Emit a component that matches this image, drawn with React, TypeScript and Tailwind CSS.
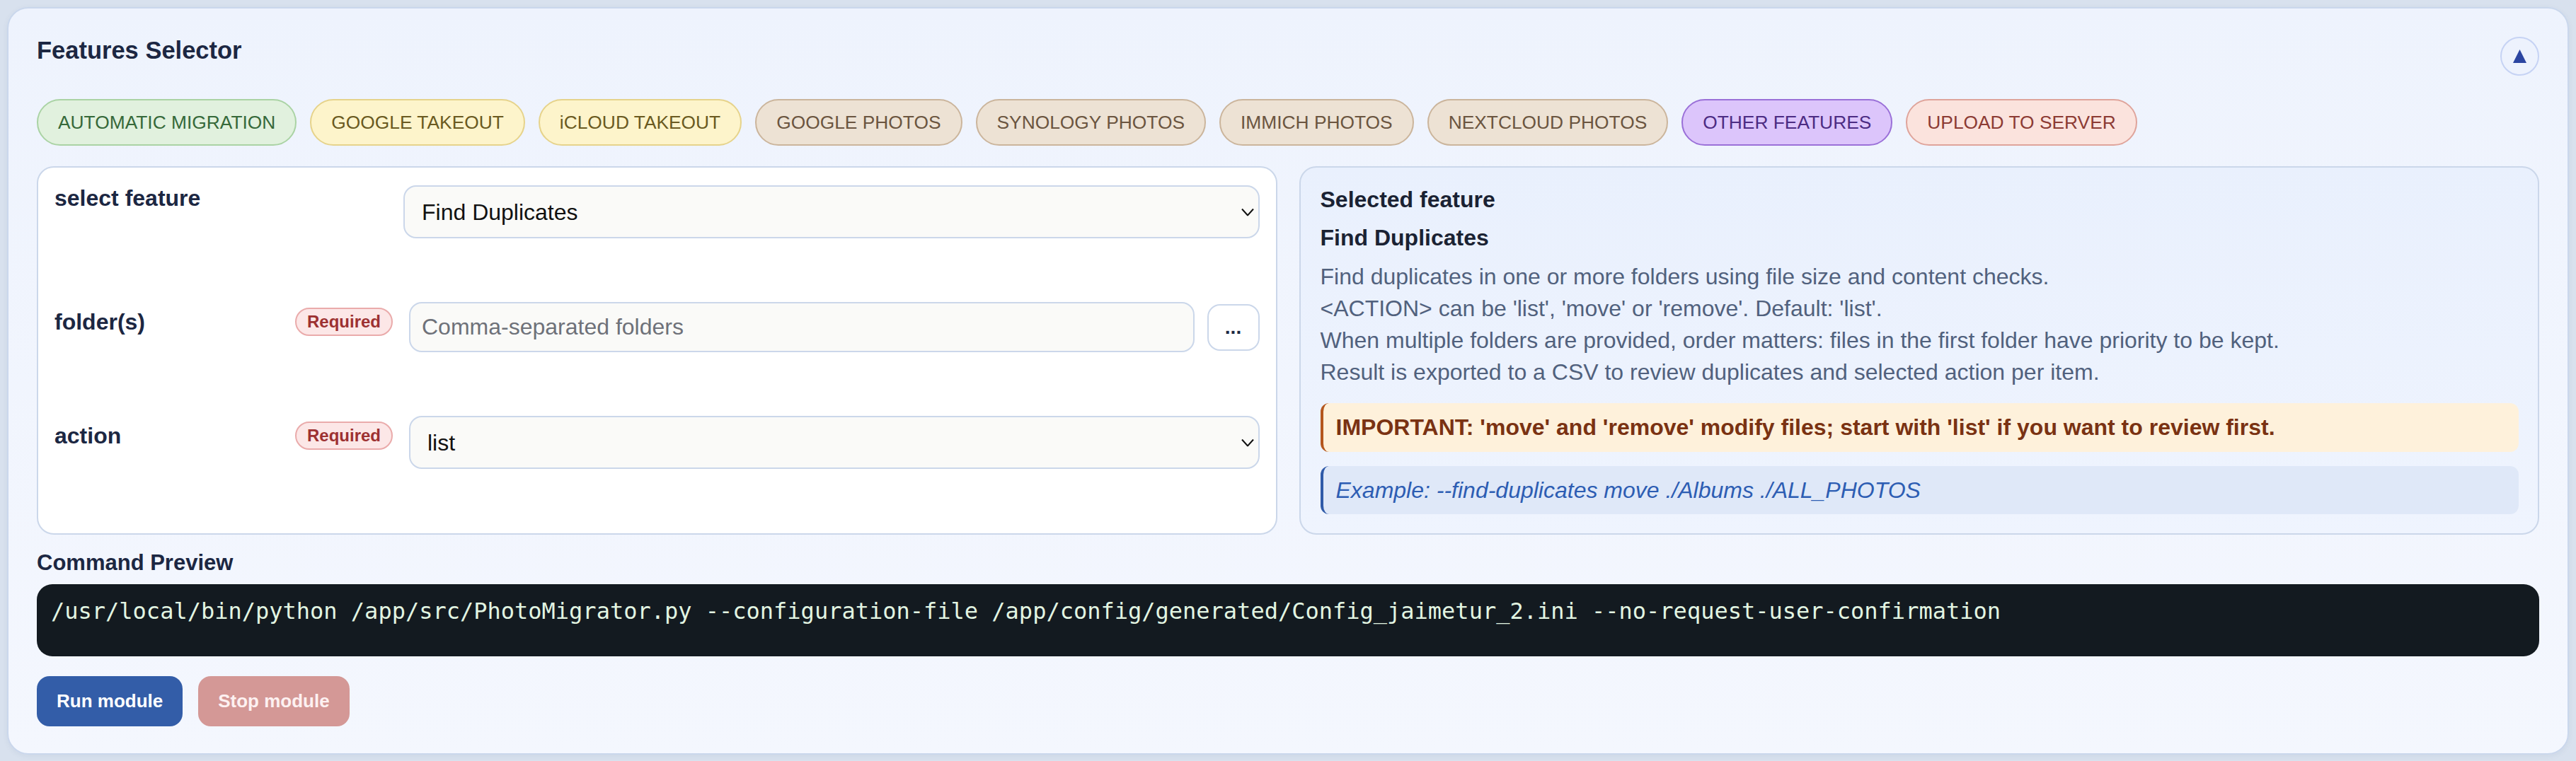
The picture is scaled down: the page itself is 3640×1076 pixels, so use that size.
import React from "react";

type Pill = { label: string; cls: string };

const pills: Pill[] = [
  { label: "AUTOMATIC MIGRATION", cls: "bg-[#e1f1de] border-[#aad3a4] text-[#36693a]" },
  { label: "GOOGLE TAKEOUT", cls: "bg-[#fdf4cb] border-[#e6d38b] text-[#6a5a21]" },
  { label: "iCLOUD TAKEOUT", cls: "bg-[#fdf4cb] border-[#e6d38b] text-[#6a5a21]" },
  { label: "GOOGLE PHOTOS", cls: "bg-[#ede2d4] border-[#cbb59c] text-[#6b5540]" },
  { label: "SYNOLOGY PHOTOS", cls: "bg-[#ede2d4] border-[#cbb59c] text-[#6b5540]" },
  { label: "IMMICH PHOTOS", cls: "bg-[#ede2d4] border-[#cbb59c] text-[#6b5540]" },
  { label: "NEXTCLOUD PHOTOS", cls: "bg-[#ede2d4] border-[#cbb59c] text-[#6b5540]" },
  { label: "OTHER FEATURES", cls: "bg-[#dcc5fb] border-[#9a70d8] text-[#4c2c83]" },
  { label: "UPLOAD TO SERVER", cls: "bg-[#fbe3dd] border-[#dfa49b] text-[#8c3b34]" },
];

const description = [
  "Find duplicates in one or more folders using file size and content checks.",
  "<ACTION> can be 'list', 'move' or 'remove'. Default: 'list'.",
  "When multiple folders are provided, order matters: files in the first folder have priority to be kept.",
  "Result is exported to a CSV to review duplicates and selected action per item.",
];

const command =
  "/usr/local/bin/python /app/src/PhotoMigrator.py --configuration-file /app/config/generated/Config_jaimetur_2.ini --no-request-user-confirmation";

function Chevron() {
  return (
    <svg
      width="18"
      height="11"
      viewBox="0 0 18 11"
      fill="none"
      stroke="#111"
      strokeWidth="2"
      className="pointer-events-none absolute right-[8px] top-1/2 -translate-y-1/2"
    >
      <path d="M1 1l8 9 8-9" />
    </svg>
  );
}

function SelectBox({ value, options }: { value: string; options: string[] }) {
  return (
    <div className="relative flex-1">
      <select
        defaultValue={value}
        className="h-[75px] w-full appearance-none rounded-[18px] border-2 border-[#cbd7ea] bg-[#fafaf8] pl-[24px] pr-[40px] text-[32px] text-[#111] outline-none"
      >
        {options.map((o) => (
          <option key={o}>{o}</option>
        ))}
      </select>
      <Chevron />
    </div>
  );
}

function Required() {
  return (
    <span className="flex h-[40px] items-center rounded-full border-2 border-[#eaabab] bg-[#fce7e7] px-[15px] text-[24px] font-bold text-[#9d3131]">
      Required
    </span>
  );
}

export default function App() {
  return (
    <div className="min-h-screen bg-[#d8e1ee] p-[10px] font-['Liberation_Sans',Arial,sans-serif]">
      <section className="rounded-[30px] border-2 border-[#cad7ec] bg-linear-to-b from-[#eef3fd] to-[#f4f7fe] px-[40px] pt-[39px] pb-[38px] shadow-[0_2px_8px_rgba(40,60,100,0.06)]">
        <div className="flex items-start justify-between">
          <h2 className="text-[34.5px] font-bold leading-[40px] text-[#1c2742]">Features Selector</h2>
          <button className="mt-[1px] flex h-[55px] w-[55px] items-center justify-center rounded-full border-2 border-[#c6d3f4] bg-[#edf2fd]">
            <svg width="19" height="19" viewBox="0 0 19 19">
              <polygon points="0,19 9.5,0 19,19" fill="#2b45a1" />
            </svg>
          </button>
        </div>

        <div className="mt-[33px] flex flex-wrap gap-[19px]">
          {pills.map((p) => (
            <span
              key={p.label}
              className={`flex h-[66px] items-center rounded-full border-2 px-[28px] text-[26.35px] leading-none ${p.cls}`}
            >
              {p.label}
            </span>
          ))}
        </div>

        <div className="mt-[29px] grid grid-cols-2 gap-[31px]">
          <div className="rounded-[24px] border-2 border-[#cbd7ea] bg-white px-[23px] pt-[25px]">
            <div className="flex flex-col gap-[90px]">
              <div className="flex items-start">
                <label className="w-[493px] text-[32px] font-bold leading-[37px] text-[#1c2742]">select feature</label>
                <SelectBox value="Find Duplicates" options={["Find Duplicates", "Process Duplicates", "Fix Symlinks", "Rename Folders"]} />
              </div>
              <div className="flex items-start">
                <div className="mt-[8px] flex h-[40px] w-[478px] items-center justify-between">
                  <span className="text-[32px] font-bold leading-[37px] text-[#1c2742]">folder(s)</span>
                  <Required />
                </div>
                <div className="ml-[23px] flex flex-1 items-center gap-[18px]">
                  <input
                    placeholder="Comma-separated folders"
                    className="h-[71px] min-w-0 flex-1 rounded-[18px] border-2 border-[#cbd7ea] bg-[#fafaf8] pl-[16px] text-[32px] text-[#111] outline-none placeholder:text-[#6e7179]"
                  />
                  <button className="h-[66px] w-[74px] rounded-[18px] border-2 border-[#cbd7ea] bg-white text-[28px] font-bold leading-none text-[#1c2742]">
                    ...
                  </button>
                </div>
              </div>
              <div className="flex items-start">
                <div className="mt-[8px] flex h-[40px] w-[478px] items-center justify-between">
                  <span className="text-[32px] font-bold leading-[37px] text-[#1c2742]">action</span>
                  <Required />
                </div>
                <div className="ml-[23px] flex flex-1">
                  <SelectBox value="list" options={["list", "move", "remove"]} />
                </div>
              </div>
            </div>
          </div>

          <div className="rounded-[24px] border-2 border-[#cbd7ea] bg-linear-to-b from-[#e9f0fd] to-[#eff4fe] pl-[28px] pr-[27px] pt-[27px] pb-[27px]">
            <div className="text-[32px] font-bold leading-[37px] text-[#1a2233]">Selected feature</div>
            <div className="mt-[17px] text-[32px] font-bold leading-[37px] text-[#1a2233]">Find Duplicates</div>
            <div className="mt-[14px] text-[32px] leading-[45px] text-[#51617d]">
              {description.map((d) => (
                <p key={d}>{d}</p>
              ))}
            </div>
            <div className="mt-[21px] rounded-[12px] border-l-4 border-[#b4561d] bg-[#fef1db] py-[16px] pl-[18px] text-[32px] font-bold leading-[37px] text-[#7a3212]">
              IMPORTANT: 'move' and 'remove' modify files; start with 'list' if you want to review first.
            </div>
            <div className="mt-[20px] rounded-[12px] border-l-4 border-[#2f5aa8] bg-[#dfe8f8] py-[16px] pl-[18px] text-[32px] italic leading-[36px] text-[#2d5db3]">
              Example: --find-duplicates move ./Albums ./ALL_PHOTOS
            </div>
          </div>
        </div>

        <div className="mt-[21px] text-[31px] font-bold leading-[37px] text-[#1c2742]">Command Preview</div>
        <div className="mt-[12px] rounded-[22px] bg-[#131a20] pl-[20px] pt-[16px] pb-[41px] font-['DejaVu_Sans_Mono',monospace] text-[32px] leading-[45px] whitespace-pre text-[#e2f5e2]">
          {command}
        </div>

        <div className="mt-[28px] flex gap-[22px]">
          <button className="h-[71px] rounded-[18px] bg-[#335da8] px-[28px] text-[26px] font-bold text-white">Run module</button>
          <button className="h-[71px] rounded-[18px] bg-[#d49896] px-[28px] text-[26px] font-bold text-[#fdf1f1]">Stop module</button>
        </div>
      </section>
    </div>
  );
}
